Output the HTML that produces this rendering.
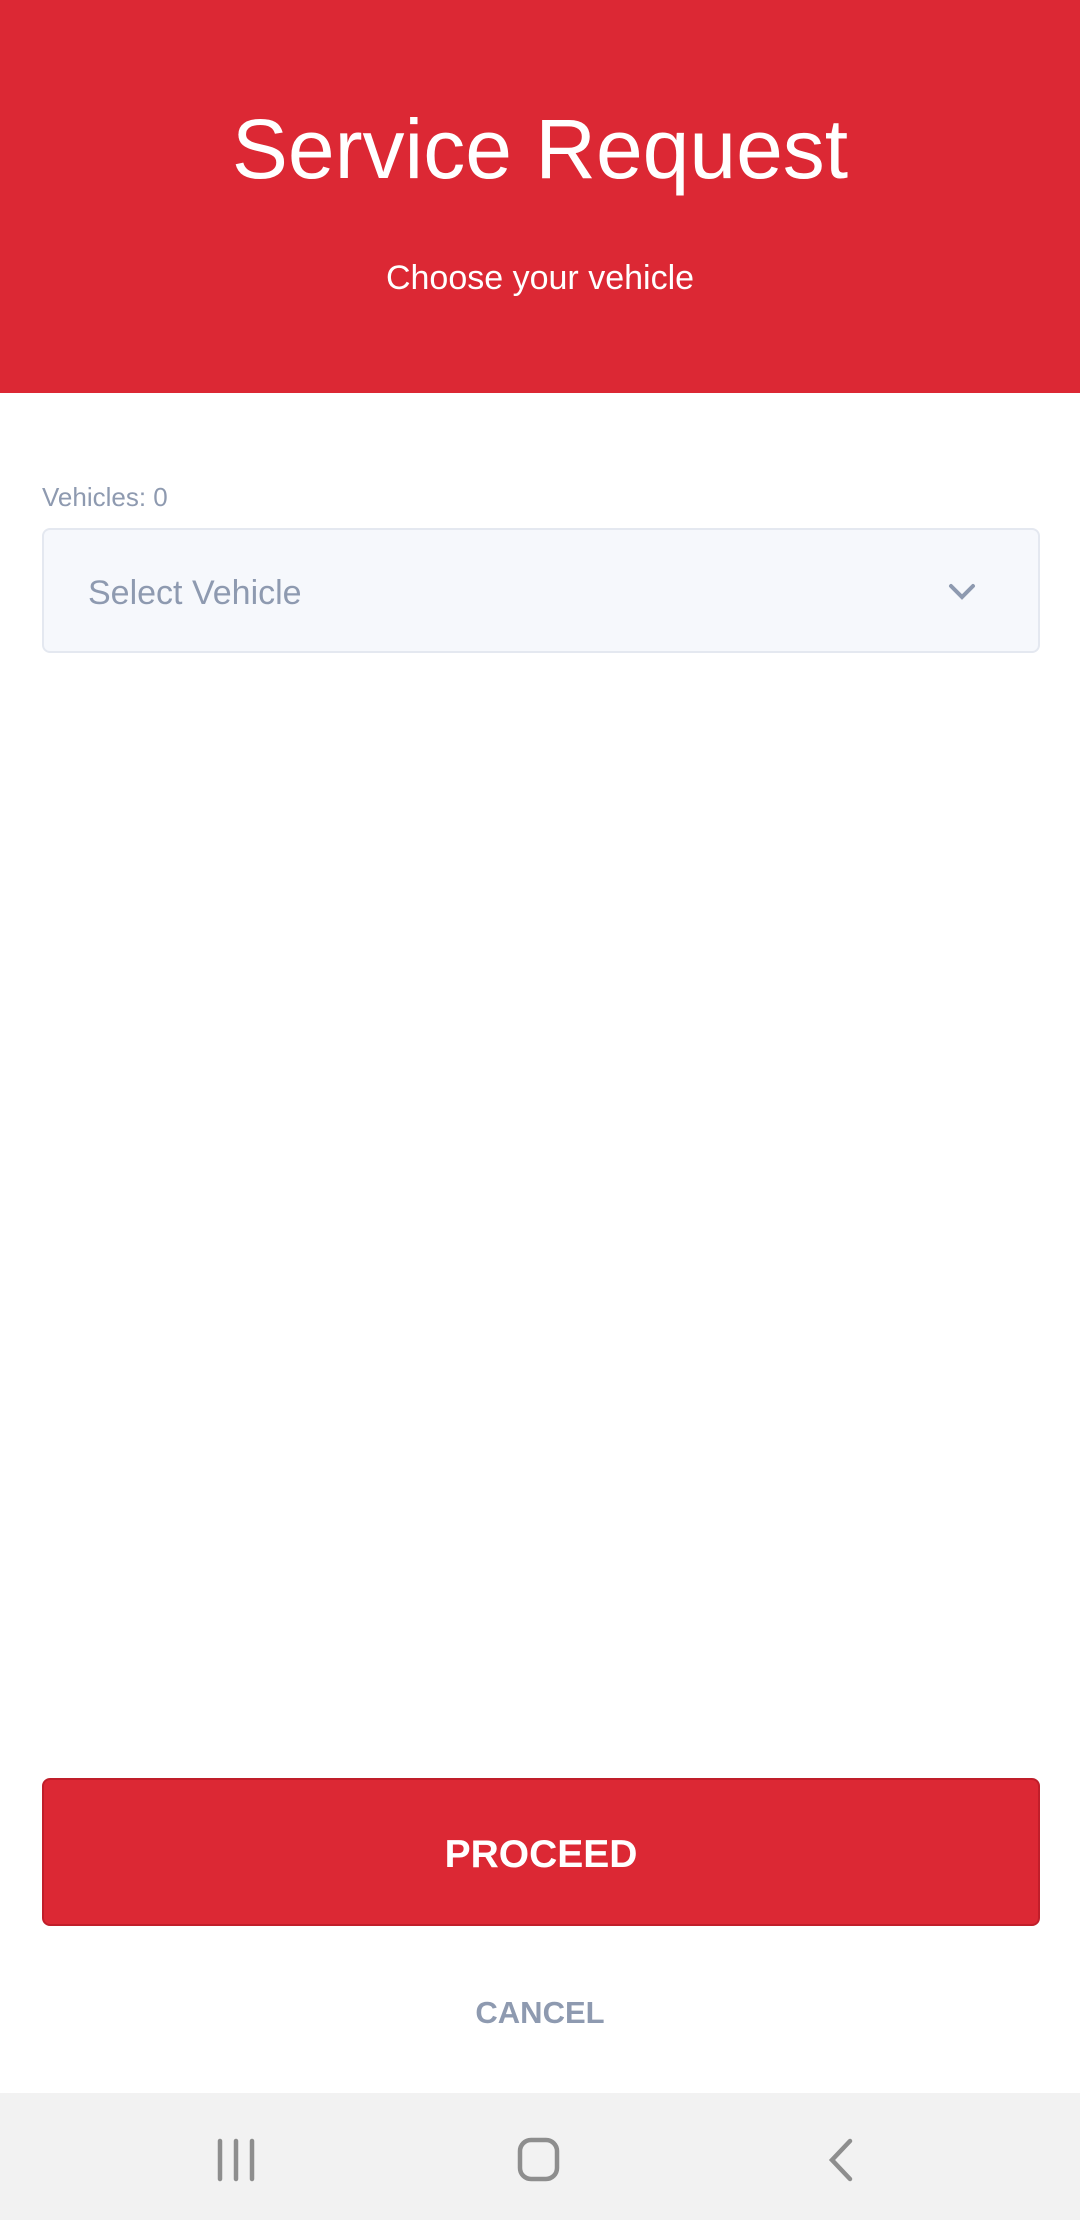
<!DOCTYPE html>
<html><head><style>
body{margin:0;width:1080px;height:2220px;position:relative;background:#fff;font-family:"Liberation Sans",sans-serif;overflow:hidden}
.hdr{position:absolute;left:0;top:0;width:1080px;height:393px;background:#dc2834;color:#fff;text-align:center}
.t{position:absolute;top:99px;width:100%;font-size:84px;line-height:100px}
.s{position:absolute;top:258px;width:100%;font-size:34px;line-height:40px}
.lbl{position:absolute;left:42px;top:482px;font-size:26px;color:#8e9ab0}
.sel{position:absolute;left:42px;top:528px;width:994px;height:121px;background:#f6f8fc;border:2px solid #e4e8f0;border-radius:8px}
.sel span{position:absolute;left:44px;top:44px;font-size:34px;color:#8e9ab0}
.btn{position:absolute;left:42px;top:1778px;width:994px;height:144px;background:#dc2834;border:2px solid #c01e2a;border-radius:8px;color:#fff;font-weight:bold;font-size:39px;text-align:center;line-height:150px}
.cn{position:absolute;top:1995px;width:100%;text-align:center;font-weight:bold;font-size:31px;color:#8e9ab0}
.nav{position:absolute;left:0;top:2093px;width:1080px;height:127px;background:#f2f2f2}
</style></head><body>
<div class="hdr"><div class="t">Service Request</div><div class="s">Choose your vehicle</div></div>
<div class="lbl">Vehicles: 0</div>
<div class="sel"><span>Select Vehicle</span>
<svg style="position:absolute;left:903px;top:52px" width="30" height="20" viewBox="0 0 30 20"><path d="M4 4 L15 15 L26 4" stroke="#8e9ab0" stroke-width="4" fill="none" stroke-linecap="round"/></svg></div>
<div class="btn">PROCEED</div>
<div class="cn">CANCEL</div>
<div class="nav"><svg width="1080" height="127">
<g stroke="#8e8e8e" stroke-width="4.5" stroke-linecap="round" fill="none">
<path d="M220 48V86M236 48V86M252 48V86"/>
<rect x="520" y="47" width="37" height="39" rx="11"/>
<path d="M850 48L832 67L850 86"/>
</g></svg></div>
</body></html>
